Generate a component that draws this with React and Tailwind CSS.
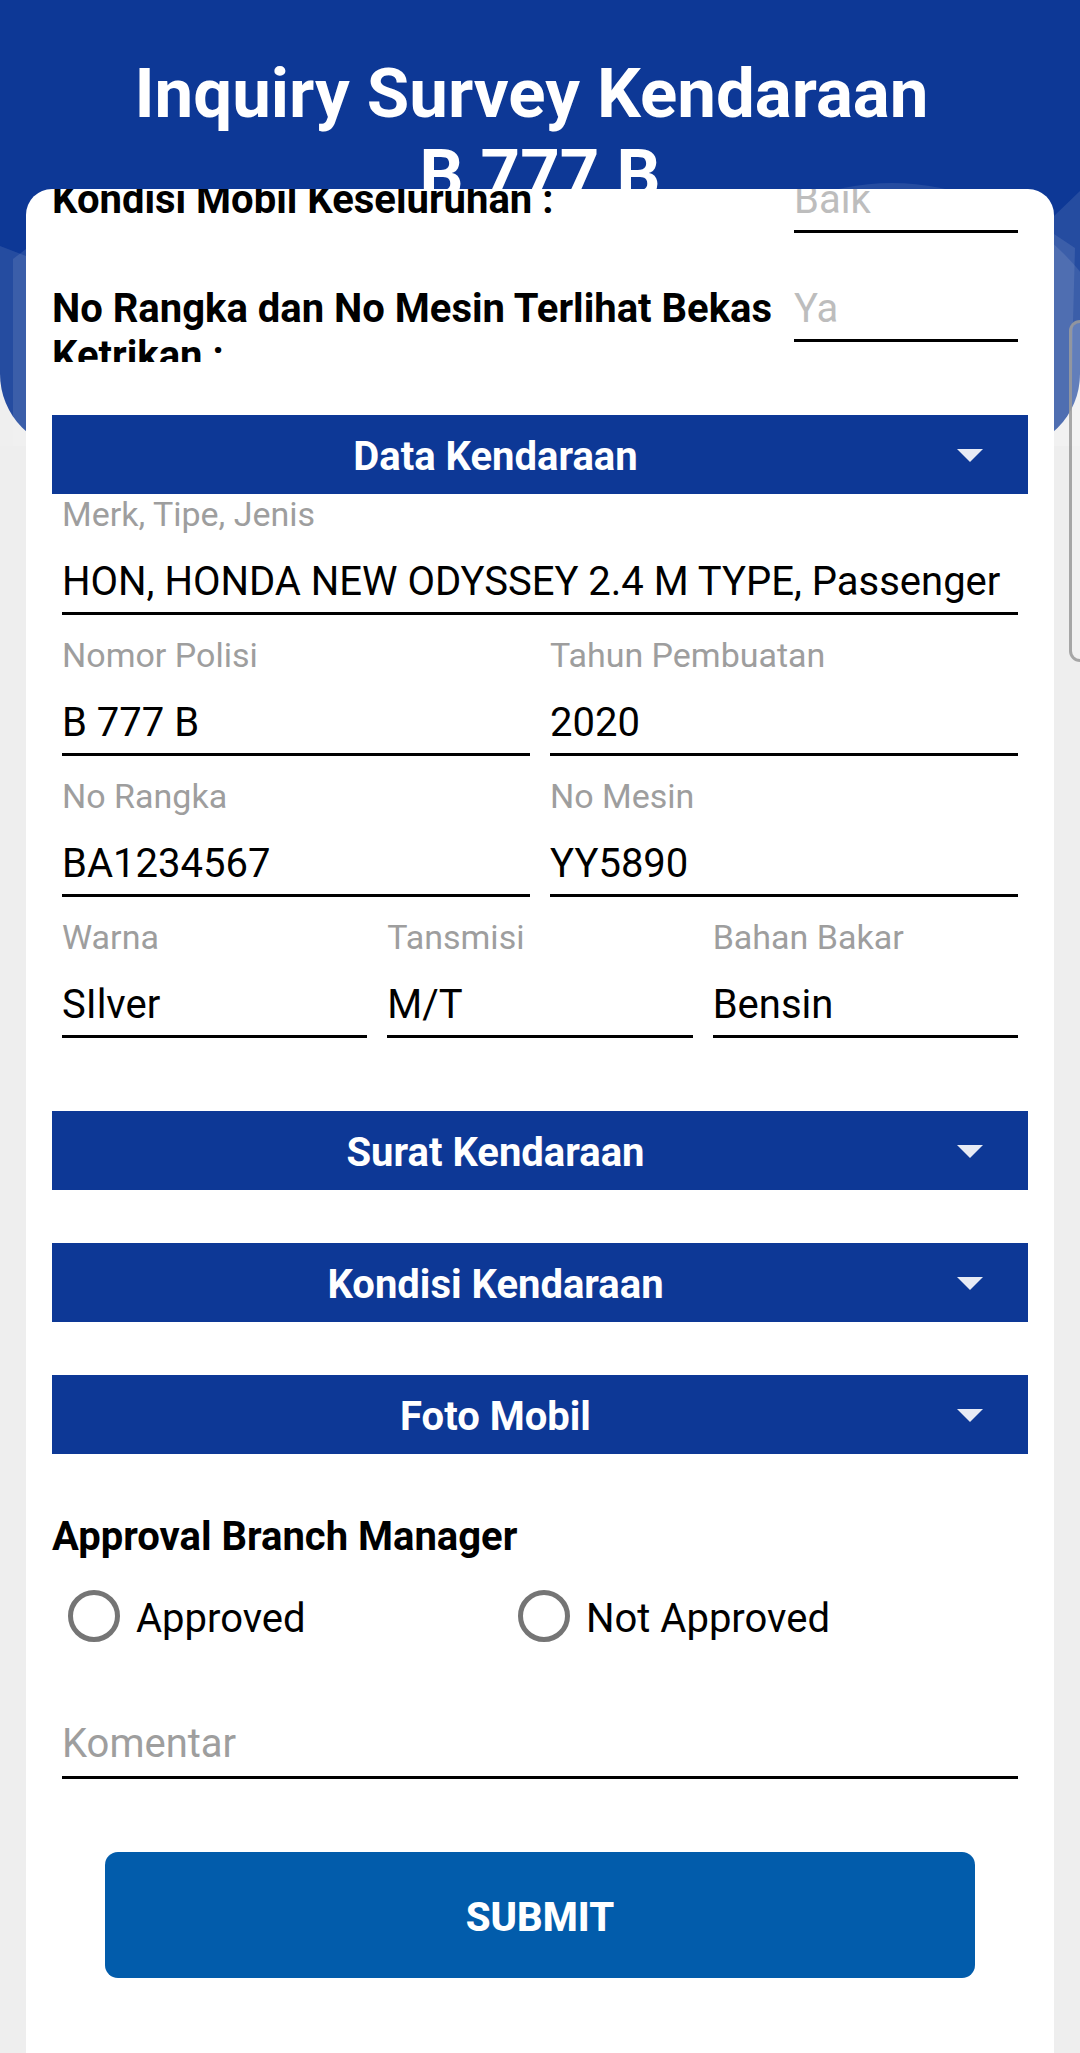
import { useState } from 'react';

const checks = [
  { id: 'kondisi-keseluruhan', label: 'Kondisi Mobil Keseluruhan :', value: 'Baik' },
  { id: 'bekas-ketrikan', label: 'No Rangka dan No Mesin Terlihat Bekas Ketrikan :', value: 'Ya' },
];

function Backdrop() {
  return (
    <svg
      aria-hidden="true"
      className="absolute inset-x-0 top-0 h-[446px] w-full"
      viewBox="0 0 1080 446"
      preserveAspectRatio="none"
    >
      <path d="M0 0H1080V374A76 76 0 0 1 1004 450H76A76 76 0 0 1 0 374Z" fill="#0d3896" />
      <g fill="#ffffff" fillOpacity="0.1">
        <circle cx="892" cy="427" r="244" />
        <path d="M0 246L26 256L120 292V446H0Z" />
        <path d="M13 259L26 249L60 224V446H13Z" />
        <path d="M1080 191L1054 216L1010 258V446H1080Z" />
        <path d="M1010 206L1054 234L1075 248L1073 322L1071 446H1010Z" />
      </g>
    </svg>
  );
}

function CheckRow({ id, label, value }) {
  return (
    <div className="flex h-[109px] items-start pr-[10px]">
      <label htmlFor={id} className="flex-1 text-[40px] leading-[47px] font-bold">
        {label}
      </label>
      <input
        id={id}
        disabled
        defaultValue={value}
        className="h-[57px] w-[224px] border-b-[3px] border-black pb-[7px] text-[40px] leading-[47px] text-[#bdbdbd]"
      />
    </div>
  );
}

function Field({ id, label, value }) {
  return (
    <div className="flex min-w-0 flex-col pb-5">
      <label htmlFor={id} className="text-[34px] leading-[41px] text-[#9e9e9e]">
        {label}
      </label>
      <input
        id={id}
        defaultValue={value}
        className="mt-[23px] h-[57px] w-full border-b-[3px] border-black pb-[7px] text-[40px] leading-[47px] outline-none"
      />
    </div>
  );
}

function Section({ title, initiallyOpen = false, children }) {
  const [open, setOpen] = useState(initiallyOpen);
  return (
    <section>
      <button
        type="button"
        aria-expanded={open}
        onClick={() => setOpen(!open)}
        className="flex w-full items-center bg-[#0d3896] pr-[45px] text-white"
      >
        <span className="flex-1 pt-[18px] pb-[14px] text-[40px] leading-[47px] font-bold">{title}</span>
        <svg aria-hidden="true" className="mt-[2px] ml-[18px] h-[13px] w-[26px]" viewBox="0 0 26 13">
          <path d="M0 0H26L13 13Z" fill="#e7ebf5" />
        </svg>
      </button>
      {open && children}
    </section>
  );
}

function Choice({ id, label }) {
  return (
    <div className="flex items-center gap-4">
      <input
        id={id}
        type="radio"
        name="approval"
        className="size-[52px] appearance-none rounded-full border-[5px] border-[#757575] checked:bg-[#0d3896] checked:bg-clip-content checked:p-2"
      />
      <label htmlFor={id} className="pt-1 text-[40px] leading-[47px]">
        {label}
      </label>
    </div>
  );
}

export default function App() {
  return (
    <div className="relative flex min-h-screen flex-col overflow-hidden bg-[#eeeeee] font-['Roboto',sans-serif] text-black">
      <Backdrop />
      <header className="relative h-[189px] px-[52px] pt-[53px]">
        <h1 className="text-center text-[69px] leading-[81px] font-bold text-white">
          Inquiry Survey Kendaraan&nbsp;
          <br />
          B 777 B
        </h1>
      </header>

      <main className="relative mx-[26px] flex-1 overflow-hidden rounded-t-[26px] bg-white px-[26px] pb-[75px]">
        <form className="flex flex-col" onSubmit={(e) => e.preventDefault()}>
          <div className="flex h-[173px] flex-col justify-start overflow-hidden">
            <div className="-mt-[13px]">
              {checks.map((c) => (
                <CheckRow key={c.id} {...c} />
              ))}
            </div>
          </div>

          <div className="mt-[53px] flex flex-col gap-[53px]">
            <Section title="Data Kendaraan" initiallyOpen>
              <div className="px-[10px]">
                <Field id="merk" label="Merk, Tipe, Jenis" value="HON, HONDA NEW ODYSSEY 2.4 M TYPE, Passenger" />
                <div className="grid grid-cols-2 gap-x-5">
                  <Field id="nopol" label="Nomor Polisi" value="B 777 B" />
                  <Field id="tahun" label="Tahun Pembuatan" value="2020" />
                  <Field id="rangka" label="No Rangka" value="BA1234567" />
                  <Field id="mesin" label="No Mesin" value="YY5890" />
                </div>
                <div className="grid grid-cols-3 gap-x-5">
                  <Field id="warna" label="Warna" value="SIlver" />
                  <Field id="transmisi" label="Tansmisi" value="M/T" />
                  <Field id="bahan-bakar" label="Bahan Bakar" value="Bensin" />
                </div>
              </div>
            </Section>
            <Section title="Surat Kendaraan" />
            <Section title="Kondisi Kendaraan" />
            <Section title="Foto Mobil" />
          </div>

          <fieldset className="mt-[59px]">
            <legend className="text-[40px] leading-[47px] font-bold">Approval Branch Manager</legend>
            <div className="mt-[30px] ml-4 grid grid-cols-[450px_1fr]">
              <Choice id="approved" label="Approved" />
              <Choice id="not-approved" label="Not Approved" />
            </div>
          </fieldset>

          <input
            aria-label="Komentar"
            placeholder="Komentar"
            className="mx-[10px] mt-[78px] h-[59px] border-b-[3px] border-black pb-[9px] text-[40px] leading-[47px] outline-none placeholder:text-[#9e9e9e]"
          />

          <button
            type="submit"
            className="mx-[53px] mt-[73px] h-[126px] rounded-[13px] bg-[#025cab] pt-1 text-[40px] leading-[47px] font-extrabold text-white"
          >
            SUBMIT
          </button>
        </form>
      </main>

      <div
        aria-hidden="true"
        className="absolute top-[320px] right-0 h-[342px] w-[11px] rounded-l-[11px] border-[3px] border-r-0 border-[#999999]/85 bg-white/20"
      />
    </div>
  );
}
